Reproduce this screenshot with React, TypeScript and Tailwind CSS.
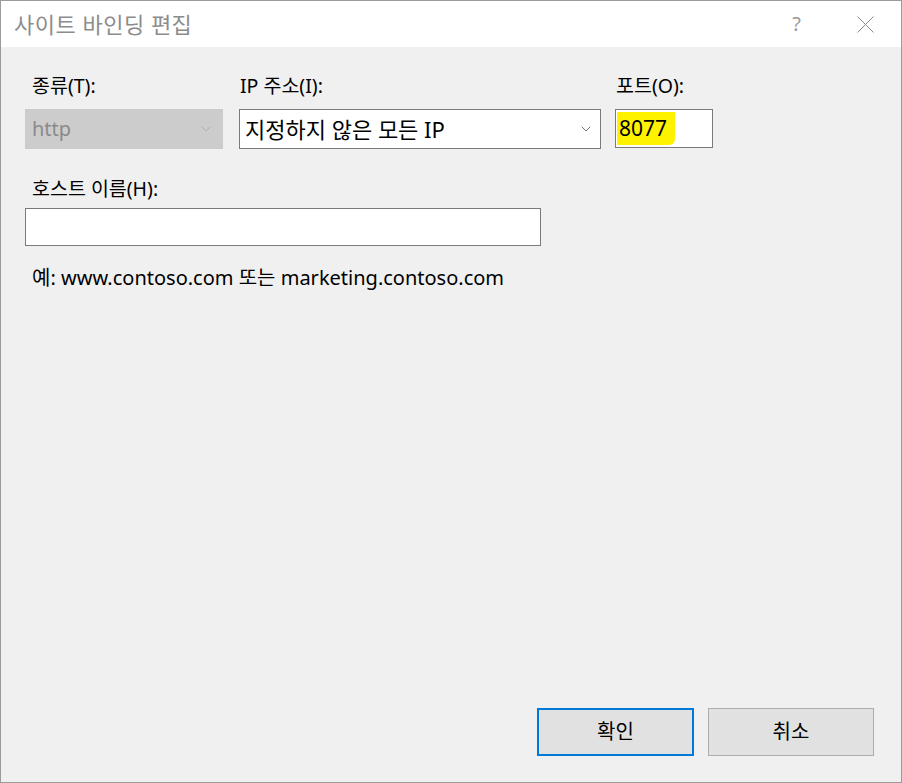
import { ChevronDown } from 'lucide-react';

const FONT = { fontFamily: '"Segoe UI", "Noto Sans", "Noto Sans CJK KR", sans-serif' };

export default function App() {
  return (
    <div
      className="w-[902px] h-[783px] flex flex-col border border-[#9b9b9b] bg-[#f0f0f0] text-[#000] overflow-hidden"
      style={FONT}
    >
      {/* Title bar */}
      <div className="h-[46px] shrink-0 flex items-center bg-white pl-[13px]">
        <span className="text-[22px] text-[#8c8c8c] tracking-[0.5px] mt-[1px]">사이트 바인딩 편집</span>
        <span className="ml-auto text-[20px] text-[#9a9a9a]">?</span>
        <svg className="ml-[56px] mr-[27px]" width="17" height="17" viewBox="0 0 17 17">
          <path d="M0.5 0.5 L16.5 16.5 M16.5 0.5 L0.5 16.5" stroke="#8a8a8a" strokeWidth="1" fill="none" />
        </svg>
      </div>

      {/* Body */}
      <div className="flex-1 flex flex-col px-[24px] pt-[26px] pb-[26px]">
        <div className="flex">
          <div className="flex flex-col w-[198px]">
            <label className="text-[19.5px] pl-[7px] leading-[26px]">종류(T):</label>
            <div className="mt-[10px] h-[40px] flex items-center bg-[#cccccc] border border-[#cccccc] pl-[6px] pr-[8px]">
              <span className="text-[20px] text-[#8a8a8a]">http</span>
              <ChevronDown className="ml-auto w-[16px] h-[16px] text-[#a8a8a8]" strokeWidth={1.25} />
            </div>
          </div>

          <div className="flex flex-col w-[362px] ml-[16px]">
            <label className="text-[19.5px] pl-[1px] leading-[26px]">IP 주소(I):</label>
            <div className="mt-[10px] h-[40px] flex items-center bg-white border border-[#7a7a7a] pl-[5px] pr-[6px]">
              <span className="text-[22px]">지정하지 않은 모든 IP</span>
              <ChevronDown className="ml-auto w-[16px] h-[16px] text-[#555]" strokeWidth={1.25} />
            </div>
          </div>

          <div className="flex flex-col w-[98px] ml-[14px]">
            <label className="text-[19.5px] pl-[1px] leading-[26px]">포트(O):</label>
            <div className="mt-[10px] h-[39px] flex items-stretch bg-white border border-[#7a7a7a] pl-[1px] py-[2px]">
              <span className="flex items-center text-[21px] bg-[#fff200] pl-[2px] pr-[8px] rounded-br-[6px]">8077</span>
            </div>
          </div>
        </div>

        <label className="mt-[27px] text-[19.5px] pl-[7px] leading-[26px]">호스트 이름(H):</label>
        <div className="mt-[6px] w-[516px] h-[38px] bg-white border border-[#7a7a7a]" />

        <p className="mt-[20px] pl-[7px] text-[20px] leading-[24px]">
          예: www.contoso.com 또는 marketing.contoso.com
        </p>

        <div className="mt-auto flex justify-end gap-[14px] pr-[3px]">
          <button className="w-[157px] h-[48px] bg-[#e1e1e1] border-2 border-[#0078d7] text-[20px]">
            확인
          </button>
          <button className="w-[166px] h-[48px] bg-[#e1e1e1] border border-[#adadad] text-[20px]">
            취소
          </button>
        </div>
      </div>
    </div>
  );
}
